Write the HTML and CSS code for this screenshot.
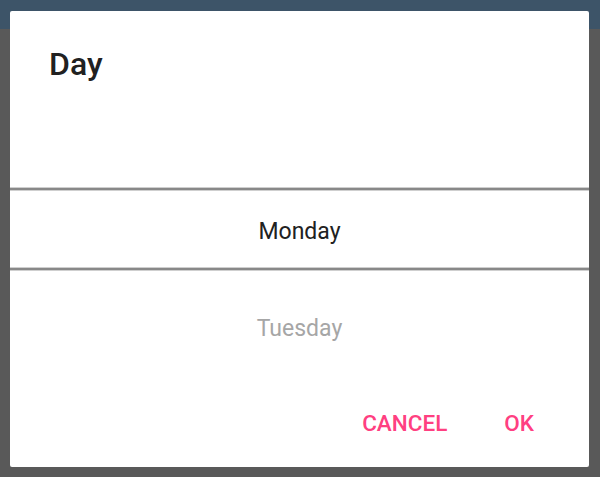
FILE: index.html
```html
<!DOCTYPE html>
<html lang="en">
<head>
    <meta charset="UTF-8">
    <meta name="viewport" content="width=device-width, initial-scale=1.0">
    <title>Day Picker</title>
    <link rel="stylesheet" href="styles.css">
</head>
<body>

    <!-- Day picker dialog -->
    <div class="dialog">
        <h2 class="dialog-title">Day</h2>

        <div class="picker">
            <div class="picker-line"></div>
            <div class="picker-selected">Monday</div>
            <div class="picker-line"></div>
            <div class="picker-next">Tuesday</div>
        </div>

        <div class="dialog-actions">
            <button type="button">CANCEL</button>
            <button type="button">OK</button>
        </div>
    </div>

</body>
</html>
```

FILE: styles.css
```css
* {
    margin: 0;
    padding: 0;
    box-sizing: border-box;
}

body {
    font-family: Roboto, "Noto Sans", sans-serif;
    height: 477px;
    overflow: hidden;
    /* app bar behind the scrim, then the dimmed screen */
    background: linear-gradient(#3d5468 0, #3d5468 29px, #595959 29px);
    padding: 11px 11px 0 10px;
}

.dialog {
    background-color: #fff;
    border-radius: 2px;
    height: 456px;
}

.dialog-title {
    padding: 35px 39px 0;
    font-size: 32px;
    line-height: 36px;
    font-weight: 500;
    color: #212121;
}

.picker {
    margin-top: 106px;
}

.picker-line {
    height: 2px;
    background-color: #888;
    box-shadow: 0 1px 0 #cfcfcf, 0 -1px 0 #cfcfcf;
}

.picker-selected {
    height: 78px;
    padding-top: 8px;
    line-height: 68px;
    font-size: 23px;
    text-align: center;
    color: #212121;
}

.picker-next {
    margin-top: 39px;
    line-height: 40px;
    font-size: 23px;
    text-align: center;
    color: #a6a6a6;
}

.dialog-actions {
    display: flex;
    justify-content: flex-end;
    gap: 57px;
    margin-top: 54px;
    padding-right: 55px;
}

.dialog-actions button {
    background: none;
    border: none;
    font-family: inherit;
    font-size: 22.5px;
    font-weight: 500;
    line-height: 40px;
    color: #ff4081;
}
```
